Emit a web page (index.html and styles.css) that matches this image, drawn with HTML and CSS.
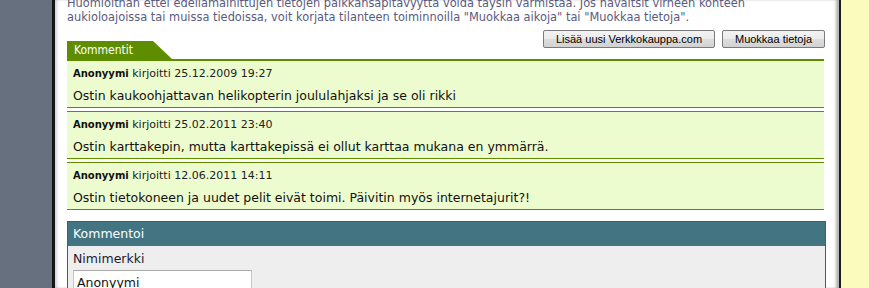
FILE: index.html
```html
<!DOCTYPE html>
<html lang="fi">
<head>
<meta charset="utf-8">
<title>Kommentit</title>
<link rel="stylesheet" href="styles.css">
</head>
<body>
<div class="layout">
  <div class="left-rail"></div>
  <main class="page">
    <p class="notice">Huomioithan ettei edellämainittujen tietojen paikkansapitävyyttä voida täysin varmistaa. Jos havaitsit virheen kohteen<br>aukioloajoissa tai muissa tiedoissa, voit korjata tilanteen toiminnoilla "Muokkaa aikoja" tai "Muokkaa tietoja".</p>
    <section class="comments">
      <div class="comments-bar">
        <h2 class="tab">Kommentit</h2>
        <div class="actions">
          <button class="btn btn-add" type="button">Lisää uusi Verkkokauppa.com</button>
          <button class="btn btn-edit" type="button">Muokkaa tietoja</button>
        </div>
      </div>
      <article class="comment">
        <div class="meta"><b class="author">Anonyymi</b> kirjoitti 25.12.2009 19:27</div>
        <p class="text">Ostin kaukoohjattavan helikopterin joululahjaksi ja se oli rikki</p>
      </article>
      <article class="comment">
        <div class="meta"><b class="author">Anonyymi</b> kirjoitti 25.02.2011 23:40</div>
        <p class="text">Ostin karttakepin, mutta karttakepissä ei ollut karttaa mukana en ymmärrä.</p>
      </article>
      <article class="comment">
        <div class="meta"><b class="author">Anonyymi</b> kirjoitti 12.06.2011 14:11</div>
        <p class="text">Ostin tietokoneen ja uudet pelit eivät toimi. Päivitin myös internetajurit?!</p>
      </article>
    </section>
    <form class="panel">
      <h3 class="panel-title">Kommentoi</h3>
      <div class="panel-body">
        <label class="label" for="nick">Nimimerkki</label>
        <input class="input" id="nick" type="text" value="Anonyymi">
      </div>
    </form>
  </main>
  <div class="right-rail"></div>
</div>
</body>
</html>
```

FILE: styles.css
```css
html, body {
  margin: 0;
  padding: 0;
  background: #ffffff;
}

body {
  font-family: "DejaVu Sans", Verdana, sans-serif;
  color: #111111;
  overflow: hidden;
}

.layout {
  display: flex;
  height: 288px;
  overflow: hidden;
}

.left-rail {
  flex: none;
  width: 52px;
  background: #67707e;
}

.page {
  flex: none;
  box-sizing: border-box;
  width: 789px;
  border-left: 3px solid #161616;
  border-right: 2px solid #1e1e1e;
  padding: 0 13px 0 12px;
  background: #ffffff;
  box-shadow: inset 3px 0 3px -1px rgba(0, 0, 0, 0.18), inset -4px 0 3px -1px rgba(0, 0, 0, 0.3);
}

.right-rail {
  flex: 1;
  background: #fbfbbe;
}

.notice {
  margin: -4px 0 0;
  font-size: 11.4px;
  line-height: 14px;
  color: #5a5a7e;
  white-space: nowrap;
}

.comments {
  width: 757px;
  margin-top: 6px;
}

.comments-bar {
  display: flex;
  justify-content: space-between;
  align-items: flex-start;
  border-bottom: 1px solid #5e8e00;
}

.tab {
  margin: 11px 0 0;
  width: 105px;
  height: 18px;
  box-sizing: border-box;
  padding-left: 7px;
  background: #5e8e00;
  color: #ffffff;
  font-family: "DejaVu Sans Condensed", "Liberation Sans", sans-serif;
  font-weight: normal;
  font-size: 12px;
  line-height: 18px;
  clip-path: polygon(0 0, 86px 0, 100% 100%, 0 100%);
}

.actions {
  display: flex;
  gap: 7px;
  margin-right: -1px;
}

.btn {
  height: 18px;
  box-sizing: border-box;
  padding: 0;
  border: 1px solid #7a7a7a;
  border-radius: 2px;
  background: linear-gradient(#f3f3f3 0%, #ebebeb 50%, #dddddd 51%, #d2d2d2 100%);
  font-family: "Liberation Sans", Arial, sans-serif;
  font-size: 11px;
  line-height: 16px;
  color: #000000;
  white-space: nowrap;
  text-align: center;
}

.btn-add {
  width: 172px;
}

.btn-edit {
  width: 103px;
}

.comment {
  background: #edfccf;
  border-top: 1px solid #5e8e00;
  border-bottom: 1px solid #5e8e00;
  padding: 6px 6px 4px;
}

.comment + .comment {
  margin-top: 3px;
}

.meta {
  font-size: 11px;
  line-height: 13px;
  color: #222222;
}

.author {
  font-size: 10px;
  font-weight: bold;
  color: #111111;
}

.text {
  margin: 8px 0 0;
  font-size: 12.5px;
  line-height: 15px;
  color: #111111;
}

.panel {
  box-sizing: border-box;
  width: 759px;
  margin: 11px 0 0;
  border: 1px solid #575757;
  background: #eeeeee;
}

.panel-title {
  margin: 0;
  height: 24px;
  padding-left: 5px;
  background: #427482;
  color: #ffffff;
  font-weight: normal;
  font-size: 12.5px;
  line-height: 24px;
}

.panel-body {
  display: flex;
  flex-direction: column;
  align-items: flex-start;
  gap: 4px;
  padding: 5px 5px 10px;
}

.label {
  font-size: 12.5px;
  line-height: 15px;
  color: #1a1a2e;
}

.input {
  box-sizing: border-box;
  width: 179px;
  height: 24px;
  margin: 0;
  padding: 0 3px;
  border: 1px solid #c6c6c6;
  border-top-color: #ababab;
  background: #ffffff;
  font-family: "DejaVu Sans", Verdana, sans-serif;
  font-size: 12.5px;
  color: #111111;
}
```
